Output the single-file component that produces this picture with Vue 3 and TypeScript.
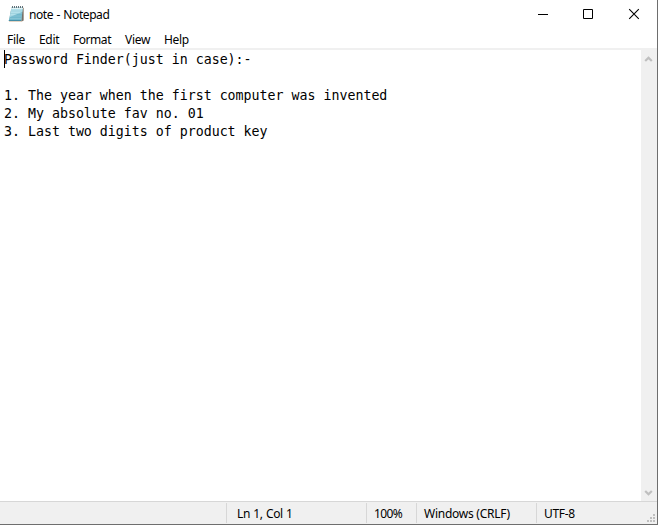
<script setup lang="ts">
const menus: { label: string; key: string }[] = [
  { label: 'File', key: 'file' },
  { label: 'Edit', key: 'edit' },
  { label: 'Format', key: 'format' },
  { label: 'View', key: 'view' },
  { label: 'Help', key: 'help' },
]

const lines: string[] = [
  'Password Finder(just in case):-',
  '',
  '1. The year when the first computer was invented',
  '2. My absolute fav no. 01',
  '3. Last two digits of product key',
]

const status: { text: string; key: string }[] = [
  { text: 'Ln 1, Col 1', key: 'position' },
  { text: '100%', key: 'zoom' },
  { text: 'Windows (CRLF)', key: 'eol' },
  { text: 'UTF-8', key: 'encoding' },
]
</script>

<template>
  <div class="window">
    <header class="titlebar">
      <svg class="app-icon" width="16" height="18" viewBox="0 0 16 18">
        <path d="M3.5 2.5H15.5V15.5L14 16.5H1Z" fill="#c9a98a" />
        <path d="M15.5 3V15.5L13.5 16.3 14.6 3Z" fill="#74706c" />
        <path d="M3.5 2.5H14.8L13.4 15.7H.8Z" fill="#72b9cd" />
        <path d="M3.5 2.5H14.8L14.2 7 1.8 12Z" fill="#b4e0ea" />
        <path d="M2.9 6H14M2.5 8.5H13.8M2 11H13.5M1.6 13.5H13.2" stroke="#93cbd9" stroke-width=".6" />
        <path d="M3.2 3.4H14.8" stroke="#e8f5f7" stroke-width="1" />
        <path d="M4.5 1V3M6.5 1V3M8.5 1V3M10.5 1V3M12.5 1V3M14.5 1V3" stroke="#627078" stroke-width="1" />
        <path d="M.8 15.5H13.2" stroke="#448da6" stroke-width="1" />
      </svg>
      <h1 class="title">note - Notepad</h1>
      <div class="controls">
        <svg width="46" height="30" viewBox="0 0 46 30"><path d="M18 14.5H28" stroke="#000" /></svg>
        <svg width="46" height="30" viewBox="0 0 46 30"><path d="M17.5 9.5H26.5V18.5H17.5Z" fill="none" stroke="#000" /></svg>
        <svg width="46" height="30" viewBox="0 0 46 30"><path d="M17.2 9.2L26.8 18.8M26.8 9.2L17.2 18.8" stroke="#000" stroke-width="1.1" /></svg>
      </div>
    </header>
    <nav class="menubar">
      <span v-for="m in menus" :key="m.key" class="menu" :class="m.key">{{ m.label }}</span>
    </nav>
    <main class="editor">
      <div class="text">
        <i class="caret"></i>
        <div v-for="(line, i) in lines" :key="i" class="line">{{ line }}</div>
      </div>
      <div class="scrollbar">
        <svg width="16" height="17" viewBox="0 0 16 17"><path d="M4.2 11L7.5 7.7 10.8 11" fill="none" stroke="#bfbfbf" stroke-width="2.2" /></svg>
        <svg width="16" height="17" viewBox="0 0 16 17"><path d="M4.2 7L7.5 10.3 10.8 7" fill="none" stroke="#bfbfbf" stroke-width="2.2" /></svg>
      </div>
    </main>
    <footer class="statusbar">
      <div class="cell blank"></div>
      <div v-for="s in status" :key="s.key" class="cell" :class="s.key"><span>{{ s.text }}</span></div>
      <svg class="grip" width="10" height="9" viewBox="0 0 10 9">
        <path d="M6 0h2v2h-2zM3 3h2v2h-2zM6 3h2v2h-2zM0 6h2v2h-2zM3 6h2v2h-2zM6 6h2v2h-2z" fill="#bfbfbf" />
      </svg>
    </footer>
  </div>
</template>

<style>
body {
  margin: 0;
  overflow: hidden;
}
</style>

<style scoped>
.window {
  box-sizing: border-box;
  width: 658px;
  height: 525px;
  display: flex;
  flex-direction: column;
  border-right: 1px solid #6e6e6e;
  border-bottom: 1px solid #6e6e6e;
  background: #fff;
  color: #000;
  font: 12px/18px "Noto Sans", "Open Sans", sans-serif;
}
.titlebar {
  display: flex;
  height: 30px;
}
.app-icon {
  margin: 5px 5px 0 8px;
}
.title {
  margin: 0;
  font-size: 12px;
  font-weight: 400;
  line-height: 30px;
  letter-spacing: -0.42px;
  word-spacing: 0.7px;
}
.controls {
  display: flex;
  margin-left: auto;
  margin-right: -1px;
}
.menubar {
  display: flex;
  box-sizing: border-box;
  height: 20px;
  padding-left: 7px;
  line-height: 20px;
  border-bottom: 2px solid #f0f0f0;
  letter-spacing: -0.3px;
}
.menu.file { width: 32px; }
.menu.edit { width: 34px; }
.menu.format { width: 52px; letter-spacing: -0.45px; }
.menu.view { width: 39px; }
.editor {
  flex: 1;
  display: flex;
  min-height: 0;
}
.text {
  position: relative;
  flex: 1;
  padding: 1px 0 0 4px;
  font: 13.289px/18px "DejaVu Sans Mono", monospace;
  white-space: pre;
}
.line {
  height: 18px;
}
.caret {
  position: absolute;
  left: 4px;
  top: 0;
  width: 1px;
  height: 18px;
  background: #000;
}
.scrollbar {
  width: 16px;
  display: flex;
  flex-direction: column;
  justify-content: space-between;
  background: #f0f0f0;
}
.statusbar {
  display: flex;
  height: 22px;
  border-top: 1px solid #d7d7d7;
  background: #f0f0f0;
  line-height: 21px;
}
.cell {
  box-sizing: border-box;
  height: 20px;
  margin-top: 1px;
  padding-left: 7px;
  white-space: nowrap;
  letter-spacing: -0.3px;
}
.cell:not(.encoding) {
  border-right: 1px solid #d7d7d7;
}
.blank { width: 227px; }
.position { width: 140px; padding-left: 10px; letter-spacing: -0.38px; word-spacing: 0.6px; }
.zoom { width: 50px; letter-spacing: -0.6px; }
.eol { width: 120px; letter-spacing: -0.25px; }
.encoding { flex: 1; }
.grip {
  margin: 12px 0 0;
}
</style>
